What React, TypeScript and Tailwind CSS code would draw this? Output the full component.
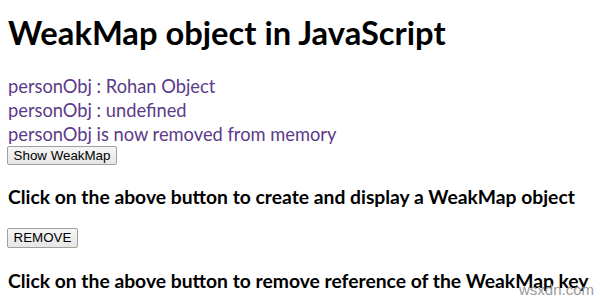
export default function App() {
  const sans = { fontFamily: 'Lato, "Open Sans", sans-serif' };
  const btn = { fontFamily: '"Liberation Sans", Arial, sans-serif' };
  return (
    <div className="relative h-[302px] w-[600px] overflow-hidden bg-white pl-2 text-black" style={sans}>
      <h1 className="mt-[14px] whitespace-nowrap text-[32.7px] font-bold leading-[37px]">
        WeakMap object in JavaScript
      </h1>

      <div className="mt-[23px] whitespace-nowrap text-[18.3px] leading-[24px] text-[#5b3a8a]">
        <div>personObj : Rohan Object</div>
        <div>personObj : undefined</div>
        <div>personObj is now removed from memory</div>
      </div>

      <button
        className="block h-[19px] w-[110px] -ml-px rounded-[2px] border border-[#a0a0a0] bg-gradient-to-b from-[#f6f6f6] to-[#e6e6e6] px-1 text-[13.33px] leading-[17px]"
        style={btn}
      >
        Show WeakMap
      </button>

      <h3 className="mt-[20px] whitespace-nowrap text-[19.3px] font-bold leading-[23px]">
        Click on the above button to create and display a WeakMap object
      </h3>

      <button
        className="mt-[20px] block h-[20px] w-[71px] -ml-px rounded-[2px] border border-[#a0a0a0] bg-gradient-to-b from-[#f6f6f6] to-[#e6e6e6] px-1 text-[13.33px] leading-[18px]"
        style={btn}
      >
        REMOVE
      </button>

      <h3 className="mt-[21px] whitespace-nowrap text-[19.3px] font-bold leading-[23px]">
        Click on the above button to remove reference of the WeakMap key
      </h3>

      <span
        className="absolute right-[6px] bottom-[5px] text-[15px] leading-none text-[#9a9a9a]"
        style={btn}
      >
        wsxdn.com
      </span>
    </div>
  );
}
